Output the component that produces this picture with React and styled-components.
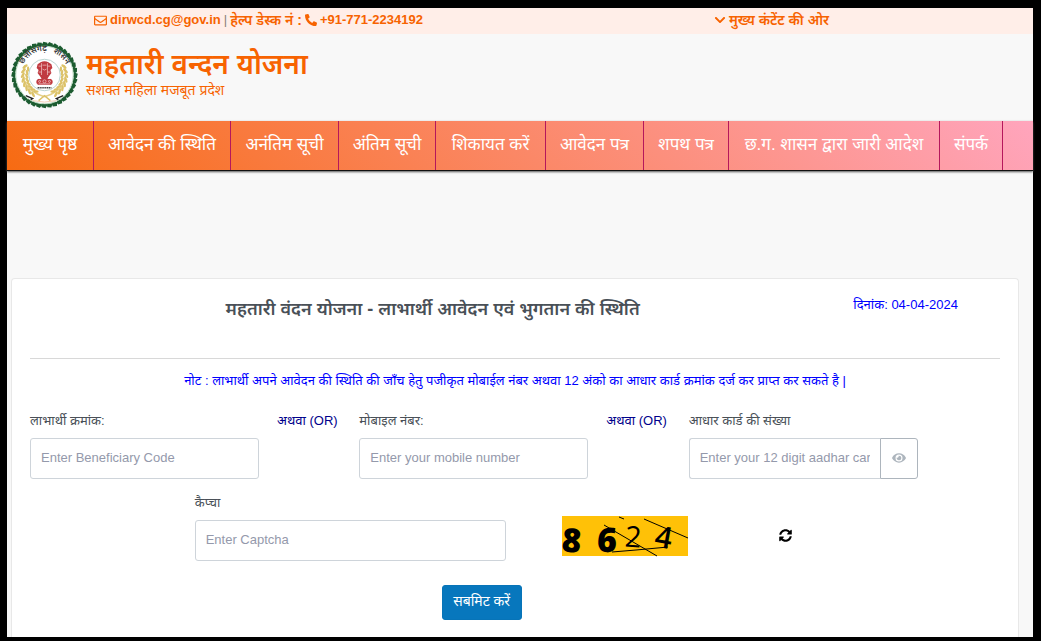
import React from 'react'

import styled, { createGlobalStyle } from 'styled-components'
import {
  FaRegEnvelope,
  FaPhoneAlt,
  FaChevronDown,
  FaEye,
  FaSyncAlt,
} from 'react-icons/fa'

const GlobalStyle = createGlobalStyle`
  * {
    box-sizing: border-box;
  }
  body {
    margin: 0;
    background: #000;
    color: #495057;
    font-family: 'Liberation Sans', 'Noto Sans', 'Noto Sans Devanagari', sans-serif;
    font-size: 13px;
    line-height: 20px;
  }
  input,
  button {
    font: inherit;
  }
`
const Frame = styled.div`
  display: flex;
  min-height: 100vh;
  padding: 8px 8px 4px 7px;
`
const Page = styled.div`
  display: flex;
  flex: 1;
  flex-direction: column;
  min-width: 0;
  background: #f8f8f8;
`
const TopBar = styled.div`
  display: grid;
  grid-template-columns: 1fr 1fr;
  height: 26px;
  background: #ffeee8;
`
const TopItem = styled.div`
  display: flex;
  align-items: center;
  justify-content: center;
  gap: 3px;
  padding: 0 10px 2px 0;
  color: #f76300;
  font-weight: 600;
  white-space: nowrap;
`
const TopLink = styled.a`
  display: flex;
  align-items: center;
  gap: 3px;
  color: inherit;
  text-decoration: none;
`
const TopText = styled.span`
  font-size: 14px;
`
const Divider = styled.span`
  color: #8a7f78;
  font-weight: 400;
`
const Header = styled.header`
  display: flex;
  gap: 8px;
  height: 87px;
  padding: 7px 4px;
`
const Brand = styled.div`
  padding-top: 6px;
  color: #f76300;
`
const BrandName = styled.h1`
  margin: 0;
  font-size: 28px;
  font-weight: 600;
  line-height: 36px;
`
const Slogan = styled.p`
  margin: 0;
  font-size: 14px;
  line-height: 14px;
`
const Nav = styled.nav`
  display: grid;
  grid-template-columns: 87fr 137fr 108fr 97fr 110fr 98fr 85fr 211fr 63fr 30fr;
  height: 50px;
  border-bottom: 1px solid #111;
  background: linear-gradient(45deg, #f76b12, #ffa5bd);
  box-shadow: 0 1px 2px #555;
`
const NavLink = styled.a`
  border-right: 1px solid #b5175c;
  color: #fff;
  font-size: 17px;
  line-height: 48px;
  text-align: center;
  text-decoration: none;
  white-space: nowrap;
`
const Card = styled.main`
  flex: 1;
  margin: 107px 14px 0 4px;
  padding: 16px 18px;
  border: 1px solid #e8e8e8;
  border-bottom: 0;
  border-radius: 4px 4px 0 0;
  background: #fff;
`
const Row = styled.div`
  display: grid;
  grid-template-columns: repeat(12, minmax(0, 1fr));
  column-gap: 18px;
`
const TitleRow = styled(Row)`
  height: 64px;
  border-bottom: 1px solid #d8d8d8;
`
const Title = styled.h2`
  grid-column: span 10;
  margin: 0;
  font-size: 18px;
  font-weight: 600;
  line-height: 28px;
  text-align: center;
`
const DateText = styled.span`
  grid-column: span 2;
  color: #00f;
  white-space: nowrap;
`
const Note = styled.p`
  margin: 12px 0 20px;
  color: #00f;
  text-align: center;
`
const Field = styled.div`
  grid-column: ${(p) => p.$start || 'auto'} / span ${(p) => p.$span || 3};
`
const Label = styled.label`
  display: block;
  height: 27px;
`
const Or = styled.span`
  color: #00008b;
  white-space: nowrap;
`
const Input = styled.input`
  display: block;
  width: 100%;
  min-width: 0;
  height: 41px;
  padding: 0 10px 2px;
  border: 1px solid #ced4da;
  border-radius: 3px;
  background: #fff;
  color: #495057;
  outline: 0;
  &::placeholder {
    color: #9499ab;
    opacity: 1;
  }
`
const InputGroup = styled.div`
  display: flex;
  ${Input} {
    flex: 1;
    border-right: 0;
    border-radius: 3px 0 0 3px;
  }
`
const EyeButton = styled.button`
  display: flex;
  align-items: center;
  justify-content: center;
  width: 38px;
  height: 41px;
  padding: 0 0 2px;
  border: 1px solid #adb5bd;
  border-radius: 0 3px 3px 0;
  background: #fff;
  color: #adb5bd;
`
const CaptchaRow = styled(Row)`
  margin-top: 14px;
`
const CaptchaBox = styled.div`
  grid-column: span 3;
  padding: 23px 0 0 38px;
`
const CaptchaImage = styled.svg`
  display: block;
  overflow: visible;
`
const RefreshButton = styled.button`
  grid-column: span 1;
  display: flex;
  align-self: start;
  margin-top: 36px;
  padding: 0 8px;
  border: 0;
  background: none;
  color: #000;
`
const SubmitRow = styled(Row)`
  margin-top: 24px;
`
const SubmitButton = styled.button`
  grid-column: 6 / span 2;
  justify-self: start;
  width: 80px;
  height: 35px;
  padding: 0 0 3px;
  border: 1px solid #0774b8;
  border-radius: 3px;
  background: #0777bd;
  color: #fff;
  font-size: 14px;
  white-space: nowrap;
`

const menu = [
  'मुख्य पृष्ठ',
  'आवेदन की स्थिति',
  'अनंतिम सूची',
  'अंतिम सूची',
  'शिकायत करें',
  'आवेदन पत्र',
  'शपथ पत्र',
  'छ.ग. शासन द्वारा जारी आदेश',
  'संपर्क',
]

const teeth = Array.from({ length: 36 }, (_, i) => i * 10)
const leaves = [-26, -14, -2, 10, 22, 34, 46, 58]

const Wreath = () => (
  <g fill="#dcc268">
    <path
      d="M14 24C9 38 16 51 34 56"
      fill="none"
      stroke="#e5d18a"
      strokeWidth="1.6"
    />
    {leaves.map((a) => (
      <g key={a} transform={`rotate(${-a} 34 35)`}>
        <ellipse cx="12" cy="35" rx="1.3" ry="3.2" transform="rotate(28 12 35)" />
        <ellipse cx="16" cy="36" rx="1.2" ry="2.8" transform="rotate(-28 16 36)" />
      </g>
    ))}
  </g>
)

const Logo = () => (
  <svg width="67" height="68" viewBox="0 0 68 68" role="img" aria-label="logo">
    <circle cx="34" cy="34" r="31" fill="#fff" stroke="#2b7040" strokeWidth="2" />
    {teeth.map((a) => (
      <path
        key={a}
        d="M31.2 4.2L32.8 0.2L37 1.2L36.2 4.8Z"
        fill="#1c5b30"
        transform={`rotate(${a} 34 34)`}
      />
    ))}
    <circle cx="34" cy="34" r="29.2" fill="none" stroke="#a9cfb0" strokeWidth="0.8" />
    <Wreath />
    <g transform="translate(68 0) scale(-1 1)">
      <Wreath />
    </g>
    <circle cx="34" cy="34" r="16" fill="#fff" stroke="#a8c9c4" strokeWidth="0.8" />
    <g fill="#c03a40">
      <path d="M30 21q4-2 8 0l3 2 1 4-2 2 1 3-3 4h-8l-3-4 1-3-2-2 1-4z" />
      <path d="M30 36h8l-1 2h-6z" />
      <path d="M27 38h14v6H27z" />
      <circle cx="28" cy="41" r="2.4" />
      <circle cx="40" cy="41" r="2.4" />
    </g>
    <g stroke="#f3cfcf" strokeWidth="0.7" fill="none">
      <path d="M31 22v12M37 22v12M28 25h3M37 25h3M28 31h3M37 31h3M32 28q2 2 4 0M32 24h4M28 43h12" />
      <circle cx="34" cy="40.500" r="1.6" />
      <circle cx="29" cy="40.500" r="1" />
      <circle cx="39" cy="40.500" r="1" />
    </g>
    <path d="M27 47h14" stroke="#444" strokeWidth="1.4" strokeDasharray="1.4 0.5" />
    <path d="M28 60l6-5 6 5" fill="none" stroke="#dcc268" strokeWidth="1.4" />
    <path d="M15 55l7 3-2 1M53 55l-7 3 2 1" fill="none" stroke="#222" strokeWidth="1.3" />
    <path d="M22 60q12 3 24 0" fill="none" stroke="#efc2a4" strokeWidth="0.8" />
    <path id="arc" d="M12 24A24 24 0 0 1 56 24" fill="none" />
    <g fontSize="8" fontWeight="600" fill="#333">
      <text>
        <textPath href="#arc" startOffset="1">
          छत्तीसगढ़
        </textPath>
      </text>
      <text textAnchor="end">
        <textPath href="#arc" startOffset="99%">
          शासन
        </textPath>
      </text>
    </g>
  </svg>
)

const Captcha = () => (
  <CaptchaImage width="126" height="40" viewBox="0 0 126 40" role="img" aria-label="captcha">
    <rect width="126" height="40" fill="#ffc107" />
    <g fill="#000" fontFamily="Open Sans, sans-serif">
      <text x="0" y="36" fontSize="33" fontWeight="800" transform="rotate(5 9 24)">8</text>
      <text x="35" y="36" fontSize="34" fontWeight="800" transform="rotate(3 45 24)">6</text>
      <text x="63" y="31" fontSize="29" fontWeight="500" transform="rotate(4 71 20)">2</text>
      <text x="93" y="32" fontSize="30" fontWeight="600" transform="rotate(10 102 22)">4</text>
    </g>
    <g fill="none" stroke="#000" strokeWidth="1">
      <path d="M42 9L95 40M50 36L74 34L106 31M57 1l5 2M82 3L126 22" />
    </g>
  </CaptchaImage>
)

const App = () => {
  return (
    <Frame>
      <GlobalStyle />
      <Page>
        <TopBar>
          <TopItem>
            <TopLink href="mailto:dirwcd.cg@gov.in">
              <FaRegEnvelope size={13} />
              dirwcd.cg@gov.in
            </TopLink>
            <Divider>|</Divider>
            <TopText>हेल्प डेस्क नं :</TopText>
            <TopLink href="tel:+917712234192">
              <FaPhoneAlt size={12} />
              +91-771-2234192
            </TopLink>
          </TopItem>
          <TopItem>
            <TopLink href="#content">
              <FaChevronDown size={12} />
              <TopText>मुख्य कंटेंट की ओर</TopText>
            </TopLink>
          </TopItem>
        </TopBar>
        <Header>
          <Logo />
          <Brand>
            <BrandName>महतारी वन्दन योजना</BrandName>
            <Slogan>सशक्त महिला मजबूत प्रदेश</Slogan>
          </Brand>
        </Header>
        <Nav>
          {menu.map((item) => (
            <NavLink key={item} href="#">
              {item}
            </NavLink>
          ))}
        </Nav>
        <Card id="content">
          <TitleRow>
            <Title>महतारी वंदन योजना - लाभार्थी आवेदन एवं भुगतान की स्थिति</Title>
            <DateText>दिनांक: 04-04-2024</DateText>
          </TitleRow>
          <Note>
            नोट : लाभार्थी अपने आवेदन की स्थिति की जाँच हेतु पजीकृत मोबाईल नंबर
            अथवा 12 अंको का आधार कार्ड क्रमांक दर्ज कर प्राप्त कर सकते है |
          </Note>
          <Row>
            <Field>
              <Label htmlFor="code">लाभार्थी क्रमांक:</Label>
              <Input id="code" placeholder="Enter Beneficiary Code" />
            </Field>
            <Or>अथवा (OR)</Or>
            <Field>
              <Label htmlFor="mobile">मोबाइल नंबर:</Label>
              <Input id="mobile" placeholder="Enter your mobile number" />
            </Field>
            <Or>अथवा (OR)</Or>
            <Field>
              <Label htmlFor="aadhar">आधार कार्ड की संख्या</Label>
              <InputGroup>
                <Input id="aadhar" placeholder="Enter your 12 digit aadhar card number" />
                <EyeButton type="button" aria-label="show">
                  <FaEye size={14} />
                </EyeButton>
              </InputGroup>
            </Field>
          </Row>
          <CaptchaRow>
            <Field $start={3} $span={4}>
              <Label htmlFor="captcha">कैप्चा</Label>
              <Input id="captcha" placeholder="Enter Captcha" />
            </Field>
            <CaptchaBox>
              <Captcha />
            </CaptchaBox>
            <RefreshButton type="button" aria-label="refresh">
              <FaSyncAlt size={13} />
            </RefreshButton>
          </CaptchaRow>
          <SubmitRow>
            <SubmitButton type="submit">सबमिट करें</SubmitButton>
          </SubmitRow>
        </Card>
      </Page>
    </Frame>
  )
}

export default App
